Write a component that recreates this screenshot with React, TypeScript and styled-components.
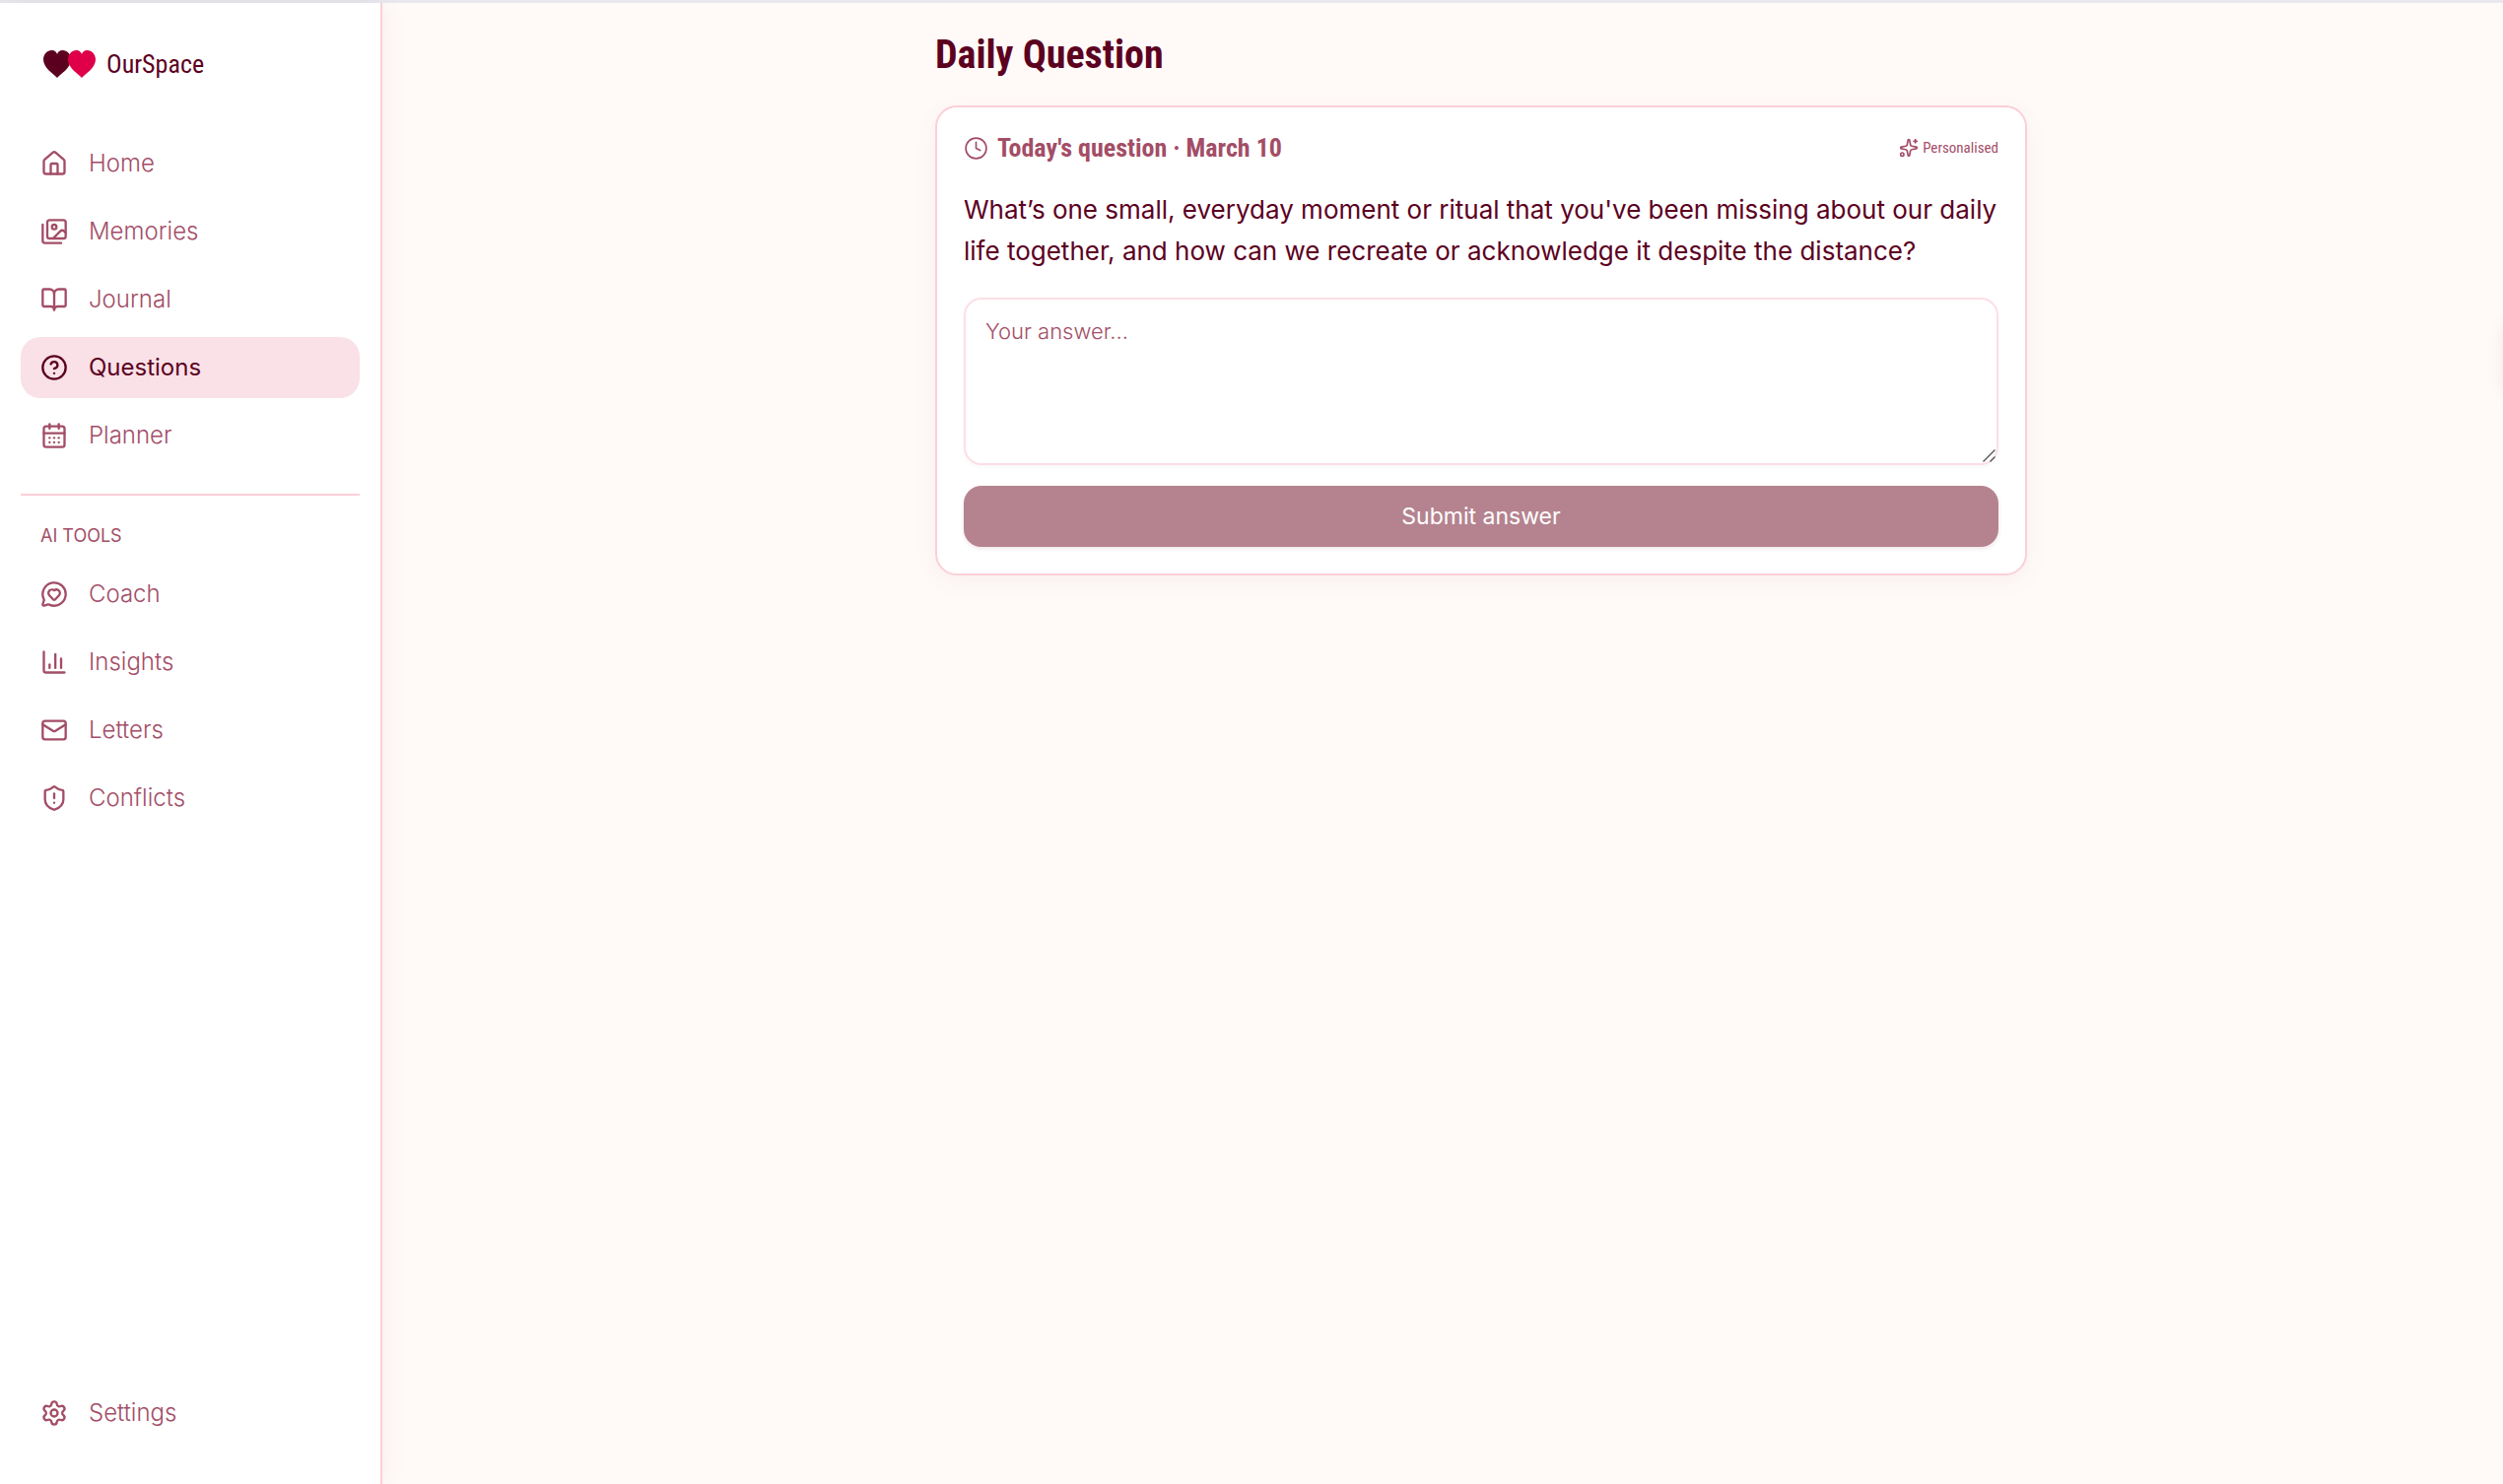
import React from 'react';
import styled, { createGlobalStyle } from 'styled-components';
import {
  BookOpen,
  CalendarDays,
  ChartColumn,
  CircleQuestionMark,
  Clock,
  House,
  Mail,
  MessageCircleHeart,
  Settings,
  ShieldAlert,
  Sparkles,
} from 'lucide-react';

const color = {
  page: '#fffaf8',
  panel: '#ffffff',
  ink: '#5c001f',
  muted: '#a34d67',
  line: '#fbcfd7',
  field: '#fce0e5',
  active: '#f9e1e7',
  button: '#b5838f',
  rose: '#df0049',
};

const bodyFont = `Inter, "Liberation Sans", sans-serif`;
const displayFont = `"Liberation Sans Narrow", "Roboto Condensed", "DejaVu Sans Condensed", sans-serif`;

const GlobalStyle = createGlobalStyle`
  *, *::before, *::after { box-sizing: border-box; }
  body {
    margin: 0;
    background: ${color.page};
    color: ${color.ink};
    font-family: ${bodyFont};
  }
  h1, h2, p, ul { margin: 0; padding: 0; }
`;

const Shell = styled.div`
  display: flex;
  min-height: 100vh;
  border-top: 3px solid #e8e8ee;
`;

const Sidebar = styled.aside`
  display: flex;
  flex-direction: column;
  flex: none;
  width: 388px;
  padding: 29px 21px 41px;
  background: ${color.panel};
  border-right: 2px solid ${color.line};
  box-shadow: 2px 0 24px rgba(92, 0, 31, 0.06);
`;

const Brand = styled.a`
  display: flex;
  align-items: center;
  gap: 10px;
  height: 66px;
  margin-bottom: 37px;
  padding-left: 23px;
  color: ${color.ink};
  font: 400 26px/32px ${displayFont};
  text-decoration: none;
`;

const NavList = styled.ul`
  display: flex;
  flex-direction: column;
  gap: 7px;
  list-style: none;
`;

const NavLink = styled.a<{ $active?: boolean }>`
  display: flex;
  align-items: center;
  gap: 21px;
  height: 62px;
  padding: 0 20px;
  border-radius: 20px;
  background: ${(p) => (p.$active ? color.active : 'transparent')};
  color: ${(p) => (p.$active ? color.ink : color.muted)};
  font-size: 24px;
  font-weight: ${(p) => (p.$active ? 400 : 300)};
  line-height: 32px;
  text-decoration: none;
`;

const Divider = styled.hr`
  width: 100%;
  height: 2px;
  margin: 28px 0 30px;
  border: 0;
  background: ${color.line};
`;

const GroupLabel = styled.h2`
  margin-bottom: 17px;
  padding-left: 20px;
  color: ${color.muted};
  font-size: 18px;
  font-weight: 400;
  line-height: 22px;
`;

const Footer = styled.div`
  margin-top: auto;
`;

const Main = styled.main`
  flex: 1;
  min-width: 0;
  padding: 24px 0 24px 78px;
`;

const Column = styled.div`
  display: flex;
  flex-direction: column;
  gap: 22px;
  width: 100%;
  max-width: 1108px;
  margin: 0 auto;
`;

const Title = styled.h1`
  color: ${color.ink};
  font: 700 40px/58px ${displayFont};
`;

const Card = styled.section`
  display: flex;
  flex-direction: column;
  padding: 22px 27px 27px;
  background: ${color.panel};
  border: 2px solid ${color.line};
  border-radius: 22px;
  box-shadow: 0 6px 24px rgba(92, 0, 31, 0.05);
`;

const CardHeader = styled.div`
  display: flex;
  align-items: center;
  justify-content: space-between;
  height: 38px;
  margin-bottom: 23px;
  color: ${color.muted};
`;

const Eyebrow = styled.h2`
  display: flex;
  align-items: center;
  gap: 9px;
  font: 700 26px/38px ${displayFont};
`;

const Tag = styled.span`
  display: flex;
  align-items: center;
  gap: 4px;
  font: 400 15px/22px ${displayFont};
`;

const Prompt = styled.label`
  margin-bottom: 26px;
  color: ${color.ink};
  font-size: 26px;
  font-weight: 400;
  line-height: 42px;
`;

const Field = styled.div`
  position: relative;
  display: flex;
  margin-bottom: 21px;
`;

const Answer = styled.textarea`
  width: 100%;
  height: 170px;
  padding: 16px 20px;
  border: 2px solid ${color.field};
  border-radius: 18px;
  background: ${color.panel};
  box-shadow: 0 2px 4px rgba(92, 0, 31, 0.04);
  color: ${color.ink};
  font: 300 22px/32px ${bodyFont};
  resize: none;
  outline: none;

  &::placeholder {
    color: ${color.muted};
    opacity: 1;
  }
`;

const Grip = styled.svg`
  position: absolute;
  right: 3px;
  bottom: 3px;
  pointer-events: none;
`;

const Submit = styled.button`
  height: 62px;
  border: 0;
  border-radius: 18px;
  background: ${color.button};
  box-shadow: 0 2px 4px rgba(92, 0, 31, 0.1);
  color: #fff;
  font: 400 23px/32px ${bodyFont};
`;

const EdgeHandle = styled.div`
  position: fixed;
  top: 328px;
  right: -12px;
  width: 12px;
  height: 72px;
  box-shadow: 0 0 16px rgba(92, 0, 31, 0.08);
`;

const heart =
  'M14 28C11 24.500 0 18 0 9.500C0 4 4 0 8.500 0C11.500 0 13.500 1.800 14 4C14.500 1.800 16.500 0 19.500 0C24 0 28 4 28 9.500C28 18 17 24.500 14 28Z';

function Logo() {
  return (
    <svg width="54" height="28" viewBox="0 0 54 28" aria-hidden="true">
      <path d={heart} fill={color.ink} />
      <path d={heart} fill={color.rose} transform="translate(25 0)" />
    </svg>
  );
}

type IconProps = { size?: number; strokeWidth?: number };

function Gallery({ size = 24, strokeWidth = 2 }: IconProps) {
  return (
    <svg
      width={size}
      height={size}
      viewBox="0 0 24 24"
      fill="none"
      stroke="currentColor"
      strokeWidth={strokeWidth}
      strokeLinecap="round"
      strokeLinejoin="round"
      aria-hidden="true"
    >
      <path d="M18 22H4a2 2 0 0 1-2-2V6" />
      <path d="m22 13-1.296-1.296a2.410 2.410 0 0 0-3.408 0L11 18" />
      <circle cx="12" cy="8" r="2" />
      <rect width="16" height="16" x="6" y="2" rx="2" />
    </svg>
  );
}

type Item = { label: string; icon: React.ComponentType<IconProps>; active?: boolean };

const mainItems: Item[] = [
  { label: 'Home', icon: House },
  { label: 'Memories', icon: Gallery },
  { label: 'Journal', icon: BookOpen },
  { label: 'Questions', icon: CircleQuestionMark, active: true },
  { label: 'Planner', icon: CalendarDays },
];

const toolItems: Item[] = [
  { label: 'Coach', icon: MessageCircleHeart },
  { label: 'Insights', icon: ChartColumn },
  { label: 'Letters', icon: Mail },
  { label: 'Conflicts', icon: ShieldAlert },
];

function NavItem({ label, icon: Icon, active }: Item) {
  return (
    <NavLink href="#" $active={active} aria-current={active ? 'page' : undefined}>
      <Icon size={28} strokeWidth={2} />
      {label}
    </NavLink>
  );
}

function Nav({ items }: { items: Item[] }) {
  return (
    <NavList>
      {items.map((item) => (
        <li key={item.label}>
          <NavItem {...item} />
        </li>
      ))}
    </NavList>
  );
}

export default function App() {
  return (
    <>
      <GlobalStyle />
      <Shell>
        <Sidebar>
          <Brand href="#">
            <Logo />
            OurSpace
          </Brand>
          <Nav items={mainItems} />
          <Divider />
          <GroupLabel>AI TOOLS</GroupLabel>
          <Nav items={toolItems} />
          <Footer>
            <NavItem label="Settings" icon={Settings} />
          </Footer>
        </Sidebar>
        <Main>
          <Column>
            <Title>Daily Question</Title>
            <Card>
              <CardHeader>
                <Eyebrow>
                  <Clock size={25} strokeWidth={1.6} />
                  Today's question · March 10
                </Eyebrow>
                <Tag>
                  <Sparkles size={20} strokeWidth={2} />
                  Personalised
                </Tag>
              </CardHeader>
              <Prompt htmlFor="answer">
                What’s one small, everyday moment or ritual that you've been missing about our daily
                life together, and how can we recreate or acknowledge it despite the distance?
              </Prompt>
              <Field>
                <Answer id="answer" placeholder="Your answer..." />
                <Grip width="13" height="13" viewBox="0 0 13 13" stroke="#555" strokeWidth="1.4">
                  <path d="M0.500 12.500L12.500 0.500M7.500 12.500L12.500 7.500" />
                </Grip>
              </Field>
              <Submit type="button">Submit answer</Submit>
            </Card>
          </Column>
        </Main>
        <EdgeHandle />
      </Shell>
    </>
  );
}
